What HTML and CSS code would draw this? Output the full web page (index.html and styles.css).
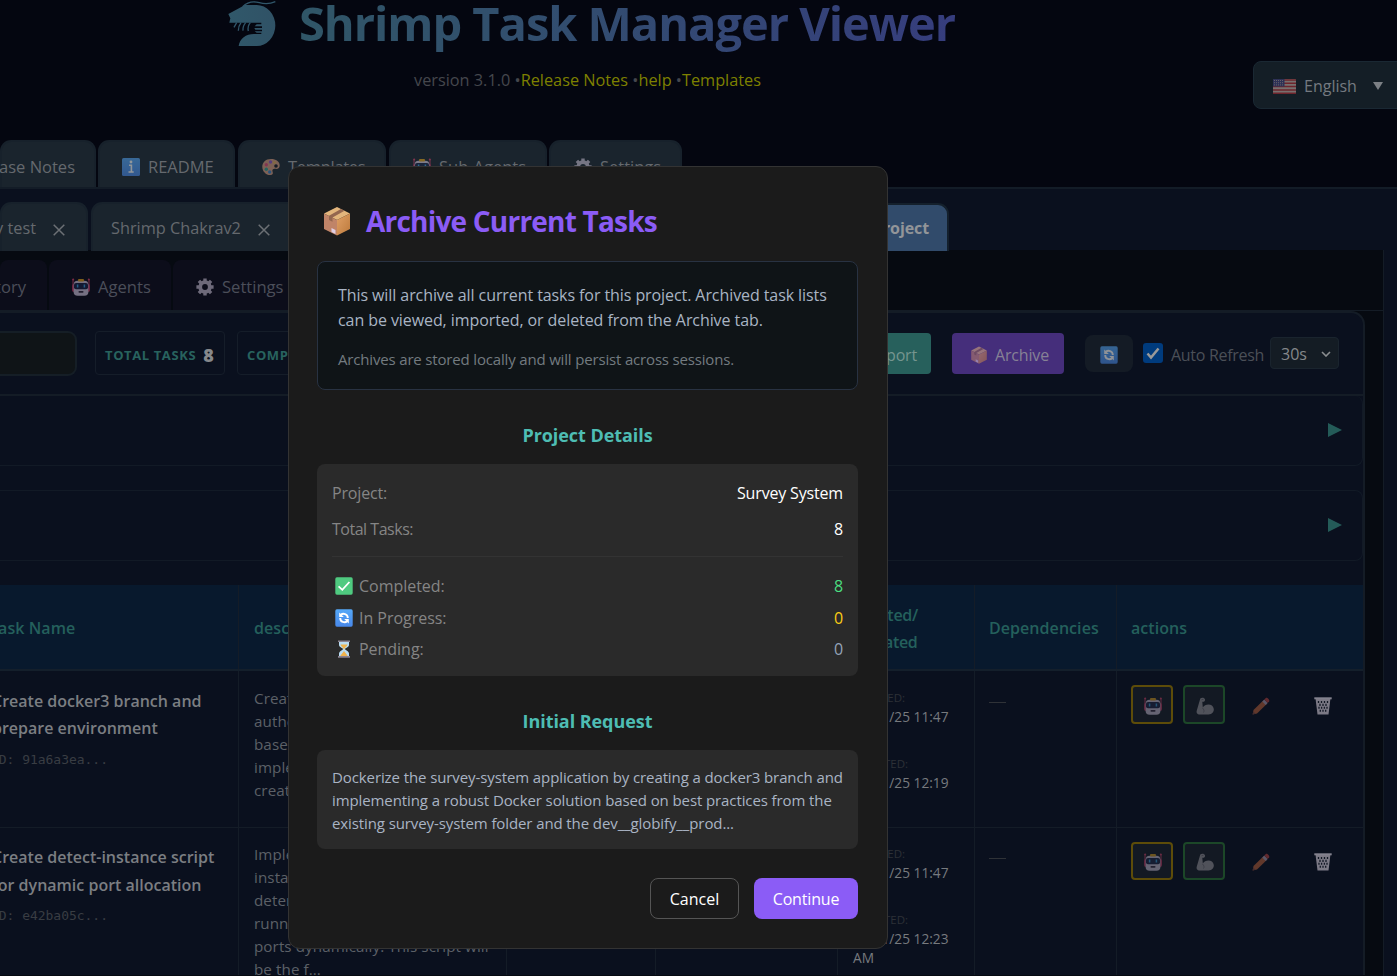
FILE: index.html
```html
<!DOCTYPE html>
<html lang="en">
<head>
<meta charset="utf-8">
<title>Shrimp Task Manager Viewer</title>
<link rel="stylesheet" href="styles.css">
</head>
<body>
<svg class="defs" aria-hidden="true">
  <defs>
    <linearGradient id="logoFill" x1="0" x2="1"><stop offset="0" stop-color="#30586a"/><stop offset="1" stop-color="#305266"/></linearGradient>
    <linearGradient id="blueTile" x1="0" y1="0" x2="0" y2="1"><stop offset="0" stop-color="#55a8f8"/><stop offset="1" stop-color="#4888ea"/></linearGradient>
    <linearGradient id="boxRight" x1="0" y1="0" x2="1" y2="1"><stop offset="0" stop-color="#e0a066"/><stop offset="1" stop-color="#bd7a3c"/></linearGradient>
  </defs>
  <symbol id="package" viewBox="0 0 26 30">
    <path d="M13 1 26 7.5 13 14 0 7.5Z" fill="#e3b57c"/>
    <path d="M0 7.5 13 14V29.5L0 23Z" fill="#c08468"/>
    <path d="M26 7.5 13 14V29.5L26 23Z" fill="url(#boxRight)"/>
    <path d="M17 3 20.5 4.8 8.5 11.5 8.5 15.8 5 14V9.8Z" fill="#94664f"/>
    <path d="M7.5 22 11.5 24V28L7.5 26Z" fill="#e0cfe4"/>
  </symbol>
  <symbol id="robot" viewBox="0 0 18 18">
    <path d="M1 1V9M17 1V9" stroke="#d3416a" stroke-width="1"/>
    <circle cx="1.2" cy="1.5" r="1" fill="#e0446d"/><circle cx="16.8" cy="1.5" r="1" fill="#e0446d"/>
    <rect x="0" y="6" width="18" height="8" rx="2" fill="#c63864"/>
    <rect x="1.6" y="2.8" width="14.8" height="15" rx="4" fill="#d6cbe2"/>
    <rect x="6" y="1" width="6" height="2.600" rx="1" fill="#e8a91c"/>
    <rect x="2" y="5" width="14" height="6.200" rx="2" fill="#1b2447"/>
    <path d="M5.6 6.6V9.4M12.4 6.6V9.4" stroke="#38a7e8" stroke-width="1.5"/>
    <rect x="6.5" y="13" width="5" height="1.8" rx=".8" fill="#3a3045"/>
  </symbol>
  <symbol id="gear" viewBox="0 0 18 18">
    <circle cx="9" cy="9" r="4.800" fill="none" stroke="#c8bfd2" stroke-width="3.800"/>
    <path d="M9 .4V4M9 14v3.6M.4 9H4M14 9h3.6M2.9 2.9 5.5 5.5M12.5 12.5l2.6 2.6M2.9 15.1l2.6-2.6M12.5 5.5l2.6-2.6" stroke="#c8bfd2" stroke-width="3.400"/>
  </symbol>
  <symbol id="info" viewBox="0 0 18 18">
    <rect width="18" height="18" rx="1.6" fill="url(#blueTile)"/>
    <circle cx="9" cy="4" r="1.4" fill="#fff"/><path d="M7 7.2h2.4v6.3M6.5 14h5.2" stroke="#fff" stroke-width="1.6" fill="none"/>
  </symbol>
  <symbol id="cycle" viewBox="0 0 18 18">
    <rect x=".3" y=".3" width="17.4" height="17.4" rx="1.6" fill="url(#blueTile)"/>
    <path d="M5.800 5.800C8 4 12.800 4.500 12.800 9M12.200 12.200C10 14 5.200 13.500 5.200 9" stroke="#fff" stroke-width="1.900" fill="none"/>
    <path d="M4.200 3.500V8H8.800ZM13.800 14.500V10H9.200Z" fill="#fff"/>
  </symbol>
  <symbol id="done" viewBox="0 0 18 18">
    <rect x=".3" y=".3" width="17.4" height="17.4" rx="1.6" fill="#4fca80"/>
    <path d="M3.6 9.3 7.3 12.8 14.4 5" fill="none" stroke="#fff" stroke-width="1.8"/>
  </symbol>
  <symbol id="hourglass" viewBox="0 0 14 18">
    <path d="M2 2V5C2 7.5 6 8 6 9S2 11 2 13.500V16H12V13.500C12 11 8 10 8 9S12 7.500 12 5V2Z" fill="#b9dcf2"/>
    <path d="M3.500 4.500h7C10 6.700 7.600 7.500 7 9.500 6.400 7.500 4 6.700 3.500 4.500ZM7 11 10.800 16H3.200Z" fill="#f0b34c"/>
    <path d="M1 1.200h12M1 16.900h12" stroke="#8b8390" stroke-width="1.600"/>
  </symbol>
  <symbol id="palette" viewBox="0 0 18 18">
    <path d="M9 1C3.500 1 .3 4.500.3 8.700c0 4.600 3.500 8.300 8 8.300 2.500 0 3-1.600 2.300-3.200-.8-2 .6-3.300 2.700-3 2.700.4 4.400-.8 4.400-3.300C17.700 3.600 14 1 9 1Z" fill="#d99a7c"/>
    <circle cx="14" cy="8" r="1.800" fill="#10161f"/><circle cx="8.500" cy="4" r="1.700" fill="#8f54c9"/><circle cx="4.300" cy="6.800" r="1.700" fill="#e14872"/><circle cx="4.300" cy="11.200" r="1.700" fill="#31a08f"/><circle cx="7.700" cy="14" r="1.700" fill="#3c80c9"/><circle cx="12.500" cy="4.500" r="1.200" fill="#e3b04a"/>
  </symbol>
  <symbol id="arm" viewBox="0 0 18 18">
    <path d="M4.300 1.500C5.500 .2 8.600.3 9 2.500 9.300 4.500 7.500 5.200 6.300 4.700L6.800 10.500C9 6.500 17 6 17.800 12 18 16 15 17.600 11 17.600H4C1 17.600.2 15.500.8 13.500Z" fill="#a5a1a7"/>
    <path d="M6.500 11C8 12.500 8.500 14 7.500 15.500M5.500 2.800 7.500 2.200" stroke="#77737b" fill="none"/>
  </symbol>
  <symbol id="pencil" viewBox="0 0 18 18">
    <path d="M.6 17.400 1.500 13 11.500 3.200 15 6.800 5 16.500Z" fill="#b86039"/>
    <path d="M10.300 4.400 12.300 2.500 15.700 6 13.700 7.900Z" fill="#a99bb0"/>
    <path d="M12.300 2.500 13.800 1C15 .2 17.800 2.500 17.200 4.200L15.700 6Z" fill="#b5423f"/>
    <path d="M.6 17.400 1.300 14.400 3.600 16.700Z" fill="#7d4a42"/>
  </symbol>
  <symbol id="trash" viewBox="0 0 18 18">
    <path d="M1.600 2 3.500 17.500H14.500L16.400 2Z" fill="#b8b1bd"/>
    <path d="M.3 1.300H17.700" stroke="#c5bfca" stroke-width="2"/>
    <path d="M4.500 4v2M7.500 4v2M10.500 4v2M13.500 4v2M6 6.700v2.300M9 6.700v2.300M12 6.700v2.300M5 9.800v2M7.600 9.800v2M10.400 9.800v2M13 9.800v2M6.300 12.700v2M9 12.700v2M11.700 12.700v2" stroke="#161b28" stroke-width="1.300"/>
  </symbol>
</svg>

<header class="header">
  <div class="brand">
    <svg class="logo" viewBox="86 0 144 141">
      <path d="M87 42 137 15H172A56 61.500 0 0 1 172 138H118C121 116 140 102 164 102H186V98H172L166 94H188V89H168L165 84H188V79H166L172 73H186V68H90L93 55Z" fill="url(#logoFill)"/>
      <path d="M130 20C148 2 166 4 180 8S208 14 228 5" fill="none" stroke="#30566a" stroke-width="4"/>
      <path d="M112 68 104 82M125 68C119 76 117 82 117 92M139 68C132 76 130 82 131 92M153 68C146 76 145 84 147 93" fill="none" stroke="#30566a" stroke-width="4"/>
    </svg>
    <h1 class="title">Shrimp Task Manager Viewer</h1>
  </div>
  <p class="version">version 3.1.0 •<a>Release Notes</a> •<a>help</a> •<a>Templates</a></p>
  <div class="lang">
    <svg class="flag" viewBox="0 0 23 15"><rect width="23" height="15" rx="1" fill="#77706f"/><path d="M0 1h23M0 4.300h23M0 7.600h23M0 10.900h23M0 14.200h23" stroke="#6e242c" stroke-width="1.500"/><rect width="11.500" height="7.500" fill="#2d3156"/><path d="M1 1.500h10M1 3.700h10M1 5.900h10" stroke="#77706f" stroke-width=".8" stroke-dasharray="1 1"/></svg>
    <span>English</span><span class="caret"></span>
  </div>
</header>

<nav class="main-tabs">
  <div class="tab tab-release">Release Notes</div>
  <div class="tab tab-readme"><svg class="ico"><use href="#info"/></svg>README</div>
  <div class="tab tab-templates"><svg class="ico"><use href="#palette"/></svg>Templates</div>
  <div class="tab tab-sub"><svg class="ico"><use href="#robot"/></svg>Sub-Agents</div>
  <div class="tab tab-settings"><svg class="ico"><use href="#gear"/></svg>Settings</div>
</nav>

<main class="workspace">
  <nav class="project-tabs">
    <div class="tab proj proj-first">My test<svg class="close" viewBox="0 0 12 12"><path d="M.7.7 11.300 11.300M11.300.7.7 11.300"/></svg></div>
    <div class="tab proj proj-second">Shrimp Chakrav2<svg class="close" viewBox="0 0 12 12"><path d="M.7.7 11.300 11.300M11.300.7.7 11.300"/></svg></div>
    <div class="tab proj proj-active">Project</div>
  </nav>
  <div class="project">
    <nav class="inner-tabs">
      <div class="itab itab-history">History</div>
      <div class="itab itab-agents"><svg class="ico"><use href="#robot"/></svg>Agents</div>
      <div class="itab itab-settings"><svg class="ico"><use href="#gear"/></svg>Settings</div>
    </nav>
    <section class="panel">
      <div class="toolbar">
        <div class="search"></div>
        <div class="stat"><span>TOTAL TASKS</span><b>8</b></div>
        <div class="stat stat-done"><span>COMPLETED</span><b>8</b></div>
        <div class="tools">
          <div class="btn btn-export">Export</div>
          <div class="btn btn-archive"><svg class="ico"><use href="#package"/></svg>Archive</div>
          <div class="btn-refresh"><svg class="ico"><use href="#cycle"/></svg></div>
          <svg class="check" viewBox="0 0 20 20"><rect width="20" height="20" rx="3" fill="#003b7d"/><path d="M4.500 10.500 8 14.500 15.500 5.500" fill="none" stroke="#999" stroke-width="2.500"/></svg>
          <span class="auto">Auto Refresh</span>
          <div class="select">30s<svg viewBox="0 0 10 6"><path d="M1 1 5 5 9 1"/></svg></div>
        </div>
      </div>
      <div class="fold"><span class="play"></span></div>
      <div class="fold fold-second"><span class="play"></span></div>
      <div class="table">
        <div class="row head">
          <div class="cell"><div class="shift head-shift">Task Name</div></div>
          <div class="cell">description</div><div class="cell"></div><div class="cell"></div>
          <div class="cell created">Created/<br>Updated</div>
          <div class="cell">Dependencies</div>
          <div class="cell">actions</div>
        </div>
        <div class="row body-row">
          <div class="cell"><div class="shift name">Create docker3 branch and<br>prepare environment</div><div class="shift id">ID: 91a6a3ea...</div></div>
          <div class="cell desc">Create a branch from the<br>authentication branch as<br>base for the Docker work,<br>implement the setup and<br>create folders</div>
          <div class="cell"></div><div class="cell"></div>
          <div class="cell dates"><small>CREATED:</small><div>08/21/25 11:47<br>AM</div><small>UPDATED:</small><div>08/21/25 12:19<br>AM</div></div>
          <div class="cell dash"><i></i></div>
          <div class="cell actions"><span class="act gold"><svg class="ico"><use href="#robot"/></svg></span><span class="act green"><svg class="ico"><use href="#arm"/></svg></span><svg class="ico pen"><use href="#pencil"/></svg><svg class="ico bin"><use href="#trash"/></svg></div>
        </div>
        <div class="row body-row row-last">
          <div class="cell"><div class="shift name">Create detect-instance script<br>for dynamic port allocation</div><div class="shift id">ID: e42ba05c...</div></div>
          <div class="cell desc">Implement a script for<br>instance detection to<br>determine which one is<br>running and assign<br>ports dynamically. This script will<br>be the f...</div>
          <div class="cell"></div><div class="cell"></div>
          <div class="cell dates"><small>CREATED:</small><div>08/21/25 11:47<br>AM</div><small>UPDATED:</small><div>08/21/25 12:23<br>AM</div></div>
          <div class="cell dash"><i></i></div>
          <div class="cell actions"><span class="act gold"><svg class="ico"><use href="#robot"/></svg></span><span class="act green"><svg class="ico"><use href="#arm"/></svg></span><svg class="ico pen"><use href="#pencil"/></svg><svg class="ico bin"><use href="#trash"/></svg></div>
        </div>
      </div>
    </section>
  </div>
</main>

<div class="modal">
  <h2 class="modal-title"><svg><use href="#package"/></svg>Archive Current Tasks</h2>
  <div class="notice">
    <p>This will archive all current tasks for this project. Archived task lists<br>can be viewed, imported, or deleted from the Archive tab.</p>
    <p class="note">Archives are stored locally and will persist across sessions.</p>
  </div>
  <h3>Project Details</h3>
  <div class="details">
    <div class="line"><span>Project:</span><b>Survey System</b></div>
    <div class="line"><span class="total">Total Tasks:</span><b>8</b></div>
    <div class="counts">
      <div class="line"><span class="lbl"><svg><use href="#done"/></svg>Completed:</span><b class="ok">8</b></div>
      <div class="line"><span class="lbl"><svg><use href="#cycle"/></svg>In Progress:</span><b class="warn">0</b></div>
      <div class="line"><span class="lbl"><svg><use href="#hourglass"/></svg>Pending:</span><b class="idle">0</b></div>
    </div>
  </div>
  <h3>Initial Request</h3>
  <div class="request">Dockerize the survey-system application by creating a docker3 branch and<br>implementing a robust Docker solution based on best practices from the<br>existing survey-system folder and the dev__globify__prod...</div>
  <div class="buttons"><button class="cancel">Cancel</button><button class="continue">Continue</button></div>
</div>
</body>
</html>
```
FILE: styles.css
```css
* { box-sizing: border-box; }
body { margin: 0; width: 1397px; height: 976px; overflow: hidden; position: relative; background: #040610; color: #6d7177; font-family: "Open Sans", "Noto Sans", sans-serif; font-size: 16px; }
h1, h2, h3, p { margin: 0; }
.defs { position: absolute; width: 0; height: 0; }
.ico { width: 18px; height: 18px; opacity: .52; flex: none; }

.header { height: 140px; position: relative; background: #040610; overflow: hidden; }
.brand { display: flex; padding-left: 228px; height: 64px; }
.logo { width: 48px; height: 47px; margin-right: 23px; }
.title { font-size: 47px; letter-spacing: -1.030px; line-height: 64px; height: 64px; margin-top: -9px; font-weight: 700; white-space: nowrap; background: linear-gradient(90deg, #305667, #324c70 45%, #363d7d); -webkit-background-clip: text; background-clip: text; color: transparent; }
.version { padding-left: 414px; line-height: 24px; margin-top: 4px; color: #45474d; white-space: nowrap; font-size: 16.300px; }
.version a { color: #7e8000; }
.lang { position: absolute; left: 1253px; top: 61px; width: 160px; height: 48px; padding: 2px 0 0 19px; display: flex; align-items: center; border: 1px solid #1a2833; border-radius: 8px; background: #141e26; color: #747a80; }
.flag { width: 23px; height: 15px; margin-right: 8px; }
.caret { margin: -1px 0 0 16px; border: 5px solid transparent; border-top: 8px solid #7c8085; border-bottom: 0; }

.main-tabs { display: flex; height: 47px; gap: 3px; }
.tab { display: flex; align-items: center; background: #1a242d; border: 2px solid #17212b; border-bottom: 0; border-radius: 11px 11px 0 0; white-space: nowrap; color: #65696e; padding-top: 4px; font-size: 16.500px; }
.main-tabs .ico { margin-right: 8px; }
.tab-release { width: 96px; justify-content: flex-end; padding-right: 19px; }
.tab-readme { width: 137px; padding-left: 22px; margin-left: -1px; }
.tab-templates { width: 148px; padding-left: 22px; letter-spacing: -.300px; }
.tab-sub { width: 158px; padding-left: 22px; }
.tab-settings { width: 133px; padding-left: 23px; margin-left: -1px; }

.workspace { height: 789px; border-top: 2px solid #131c27; background: #0a101e; padding-top: 13px; }
.project-tabs { display: flex; height: 49px; gap: 3px; }
.proj { padding-top: 1px; font-size: 16.300px; }
.close { width: 12px; height: 12px; flex: none; stroke: #6c7075; stroke-width: 1.500; fill: none; margin-top: 3px; }
.proj-first { width: 88px; justify-content: flex-end; padding-right: 21px; gap: 17px; }
.proj-second { width: 230px; padding-left: 18px; gap: 17px; }
.proj-active { width: 201px; margin-left: 424px; margin-top: 1px; padding-top: 0; justify-content: flex-end; padding-right: 18px; background: #314b6b; color: #929599; font-weight: 700; border-color: #14202c; font-size: 16px; letter-spacing: -.100px; }

.project { width: 1384px; height: 726px; margin-top: -1px; border-right: 1px solid #141c26; background: #060a11; }
.inner-tabs { display: flex; gap: 2px; height: 61px; padding-top: 10px; border-bottom: 1px solid #141c26; }
.itab { display: flex; align-items: center; background: #0c0d1a; border-radius: 8px 8px 0 0; color: #4b4e59; padding-top: 3px; font-size: 16.600px; }
.itab .ico { margin-right: 8px; }
.itab-history { width: 47px; justify-content: flex-end; padding-right: 21px; }
.itab-agents { width: 122px; padding-left: 23px; }
.itab-settings { width: 200px; padding-left: 23px; }

.panel { width: 1365px; height: 664px; background: #0a101e; border: 2px solid #141c26; border-left: 0; border-bottom: 0; border-radius: 0 14px 0 0; overflow: hidden; }
.toolbar { display: flex; height: 83px; padding-top: 18px; border-bottom: 2px solid #141c26; }
.search { width: 77px; height: 45px; background: #0f1417; border: 2px solid #151e26; border-left: 0; border-radius: 0 9px 9px 0; }
.stat { display: flex; align-items: center; width: 130px; height: 44px; margin-left: 18px; padding-left: 9px; gap: 7px; border: 1px solid #151d29; border-radius: 4px; color: #28635e; font-size: 13px; font-weight: 700; letter-spacing: .6px; white-space: nowrap; padding-top: 3px; }
.stat b { color: #85888b; font-size: 18px; letter-spacing: 0; }
.stat-done { margin-left: 12px; }
.tools { display: flex; margin-left: auto; padding-right: 24px; }
.btn { height: 41px; display: flex; align-items: center; border-radius: 4px; margin-top: 2px; padding-top: 3px; color: #868195; letter-spacing: -.170px; }
.btn-export { width: 100px; justify-content: flex-end; padding-right: 14px; background: #27605c; color: #75958f; }
.btn-archive { width: 112px; margin-left: 21px; padding-left: 18px; background: #452e7b; }
.btn-archive .ico { margin-right: 7px; }
.btn-refresh { width: 48px; height: 37px; margin: 4px 0 0 21px; padding-top: 2px; display: flex; align-items: center; justify-content: center; background: #141b25; border-radius: 8px; }
.check { width: 20px; height: 20px; margin: 12px 0 0 10px; }
.auto { width: 93px; margin: 12px 6px 0 8px; color: #4b4f57; white-space: nowrap; line-height: 24px; letter-spacing: -.300px; }
.select { width: 69px; height: 32px; margin-top: 6px; padding: 2px 7px 0 10px; display: flex; align-items: center; justify-content: space-between; background: #141c24; border: 1px solid #1a242e; border-radius: 4px; color: #85888b; }
.select svg { width: 10px; height: 6px; stroke: #8a8d90; stroke-width: 1.600; fill: none; }

.fold { height: 70px; border: 1px solid #121a26; border-left: 0; border-top: 0; border-radius: 0 8px 8px 0; display: flex; align-items: center; justify-content: flex-end; padding: 0 20px 1px 0; }
.fold-second { height: 71px; margin-top: 24px; border-top: 1px solid #121a26; }
.play { border: 7px solid transparent; border-left: 14px solid #245b58; border-right: 0; }

.table { margin-top: 24px; }
.row { display: grid; grid-template-columns: 239px 268px 149px 182px 137px 142px 247px; }
.cell { border-right: 1px solid #141c27; padding-left: 15px; }
.cell:last-child { border-right: 0; padding-left: 14px; }
.cell:nth-child(6) { padding-left: 14px; }
.head { height: 86px; background: #08192d; border-bottom: 2px solid #141f2b; color: #24605c; font-weight: 600; line-height: 27px; letter-spacing: .060px; }
.head .cell { display: flex; align-items: center; white-space: nowrap; padding-top: 2px; }
.head .created { padding-top: 4px; letter-spacing: -.300px; }
.shift { margin-left: -23px; white-space: nowrap; }
.head-shift { margin-left: -26px; }
.body-row { height: 157px; border-bottom: 1px solid #141c27; }
.row-last { height: 160px; border: 0; }
.name { padding-top: 17px; color: #7b7e82; font-weight: 600; line-height: 27px; }
.row-last .name { padding-top: 15px; line-height: 28px; }
.id { font: 13px/20px "DejaVu Sans Mono", monospace; letter-spacing: -.030px; color: #393d43; padding-top: 8px; margin-left: -24px; }
.row-last .id { padding-top: 7px; }
.desc { color: #5c6067; font-size: 15.200px; letter-spacing: .080px; line-height: 22.900px; padding-top: 16px; white-space: nowrap; }
.row-last .desc { padding-top: 15px; }
.dates { padding-top: 18px; font-size: 13.700px; line-height: 19px; color: #777a7e; }
.row-last .dates { padding-top: 17px; }
.dates small { display: block; font-size: 11.500px; line-height: 18px; color: #2d3037; }
.dates div { height: 48px; }
.dash { padding-top: 31px; }
.row-last .dash { padding-top: 30px; }
.dash i { display: block; width: 17px; height: 1px; background: #2f3237; }
.actions { display: flex; padding-top: 14px; }
.act { width: 42px; height: 39px; display: flex; align-items: center; justify-content: center; border: 2px solid #5d4c09; border-radius: 4px; background: #131923; margin-right: 10px; padding: 3px 0 0 1px; }
.row-last .act { height: 38px; padding-top: 2px; }
.act .ico { opacity: .42; }
.green { border-color: #1c4728; }
.pen { margin: 12px 44px 0 17px; opacity: .5; }
.bin { margin-top: 12px; opacity: .65; }
.row-last .pen, .row-last .bin { margin-top: 11px; }

.modal { position: absolute; left: 288px; top: 166px; width: 600px; height: 783px; padding: 27px 29px 0 28px; background: #1b1b1b; border: 1px solid #333; border-radius: 12px; }
.modal-title { height: 54px; display: flex; align-items: center; padding: 0 0 1px 7px; color: #8b5cf6; font-size: 28px; font-weight: 700; letter-spacing: -.790px; white-space: nowrap; }
.modal-title svg { width: 26px; height: 30px; margin-right: 16px; }
.notice { width: 541px; height: 129px; margin-top: 13px; padding: 21px 19px 0 20px; background: #0f1417; border: 1px solid #283242; border-radius: 8px; color: #a9b4c4; line-height: 25px; letter-spacing: -.080px; white-space: nowrap; }
.note { margin-top: 15px; font-size: 15px; line-height: 22px; letter-spacing: -.170px; color: #737b80; }
h3 { margin: 33px 0 17px; width: 541px; text-align: center; font-size: 18px; line-height: 24px; letter-spacing: -.060px; color: #4ebdb3; }
.details { width: 541px; height: 212px; padding: 17px 15px 0; background: #2a2a2a; border-radius: 8px; }
.line { display: flex; justify-content: space-between; line-height: 24px; height: 24px; margin-bottom: 12px; color: #858585; letter-spacing: -.170px; white-space: nowrap; }
.total { letter-spacing: -.480px; }
.line b { color: #fff; font-weight: 400; }
.counts { margin-top: 15px; padding-top: 17px; border-top: 1px solid #333; }
.counts .line { margin-bottom: 7.500px; letter-spacing: -.030px; }
.lbl { display: flex; align-items: center; }
.lbl svg { width: 18px; height: 18px; margin: 0 6px 0 3px; }
.line .ok { color: #4ade80; }
.line .warn { color: #facc15; }
.line .idle { color: #94a3b8; }
.request { width: 541px; height: 99px; padding: 16px 15px 0; background: #2a2a2a; border-radius: 8px; color: #a9b4c4; font-size: 15px; line-height: 23px; letter-spacing: -.100px; white-space: nowrap; }
.buttons { display: flex; justify-content: flex-end; gap: 15px; margin-top: 29px; }
button { height: 41px; padding: 0; font: inherit; color: #fff; border-radius: 8px; background: none; }
.cancel { width: 89px; border: 1px solid #555; }
.continue { width: 104px; border: 0; background: #8b5cf6; letter-spacing: -.180px; }
```
